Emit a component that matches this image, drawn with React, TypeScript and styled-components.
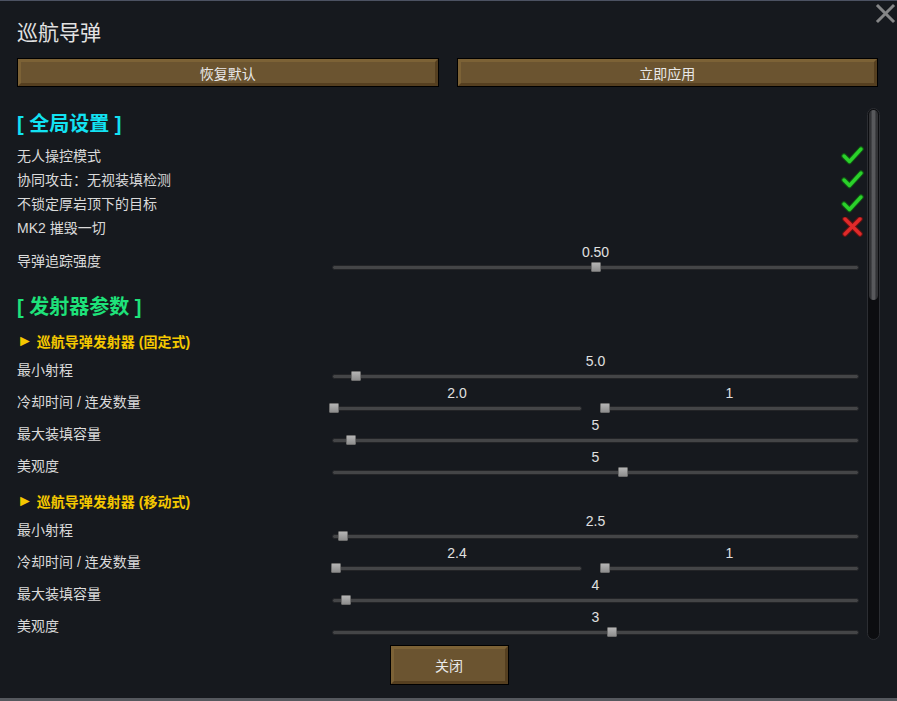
import * as React from 'react';
import styled, { createGlobalStyle } from 'styled-components';

const GlobalStyle = createGlobalStyle`
  html, body {
    margin: 0;
    padding: 0;
    background: #16191e;
  }
  body {
    font-family: "Liberation Sans", "Noto Sans CJK SC", sans-serif;
    color: #dadada;
  }
`;

const Window = styled.div`
  position: relative;
  width: 897px;
  height: 701px;
  box-sizing: border-box;
  display: flex;
  flex-direction: column;
  padding: 0 19px 0 17px;
  background: #16191e;
  border-top: 1px solid #4c5262;
  border-bottom: 3px solid #55585e;
  overflow: hidden;
`;

const Header = styled.div`
  height: 57px;
  box-sizing: border-box;
  padding-top: 19px;
`;

const Title = styled.div`
  font-size: 21px;
  line-height: 26px;
  color: #e2e2e2;
`;

const CloseIcon = styled.button`
  position: absolute;
  top: 2px;
  right: 1px;
  width: 21px;
  height: 21px;
  padding: 0;
  border: none;
  background: none;
  cursor: pointer;
`;

const ButtonRow = styled.div`
  display: grid;
  grid-template-columns: 1fr 1fr;
  gap: 18px;
`;

const Button = styled.button<{ $width?: number; $height?: number }>`
  width: ${(p) => (p.$width ? `${p.$width}px` : '100%')};
  height: ${(p) => p.$height ?? 29}px;
  padding: 0;
  border: 1px solid #000;
  background: #6b5430;
  cursor: pointer;
`;

const ButtonFace = styled.span`
  display: flex;
  align-items: center;
  justify-content: center;
  width: 100%;
  height: 100%;
  box-sizing: border-box;
  border: 3px solid;
  border-color: #7c6236 #553f20 #553f20 #7c6236;
  font-family: "Liberation Sans", "Noto Sans CJK SC", sans-serif;
  font-size: 14px;
  color: #e8e8e8;
`;

const ScrollArea = styled.div`
  display: flex;
  gap: 2px;
  height: 532px;
  margin-top: 21px;
  margin-right: -2px;
`;

const Content = styled.div`
  flex: 1;
  padding-top: 2px;
  overflow: hidden;
`;

const ScrollTrack = styled.div`
  width: 13px;
  height: 100%;
  box-sizing: border-box;
  border-radius: 7px;
  background: #0c0d10;
  border: 1px solid #2c2e33;
  padding: 1px;
`;

const ScrollThumb = styled.div`
  height: 190px;
  border-radius: 6px;
  background: linear-gradient(90deg, #323336 0 22%, #58595c 36% 64%, #323336 78% 100%);
`;

const SectionTitle = styled.div<{ $color: string; $top?: number }>`
  margin-top: ${(p) => p.$top ?? 0}px;
  margin-bottom: 5px;
  height: 28px;
  line-height: 28px;
  font-size: 20px;
  font-weight: bold;
  color: ${(p) => p.$color};
`;

const SubTitle = styled.div`
  display: flex;
  align-items: center;
  gap: 4px;
  margin-top: 7px;
  height: 25px;
  font-size: 14px;
  font-weight: bold;
  color: #f5c800;
`;

const Arrow = styled.span`
  font-size: 16px;
  font-weight: normal;
`;

const ToggleRow = styled.div`
  display: flex;
  align-items: center;
  justify-content: space-between;
  height: 24px;
  padding-right: 1px;
  font-size: 14px;
`;

const SliderRow = styled.div<{ $top?: number }>`
  display: grid;
  grid-template-columns: 315px 1fr;
  align-items: center;
  height: 32px;
  margin-top: ${(p) => p.$top ?? 0}px;
  padding-right: 6px;
  font-size: 14px;
`;

const Controls = styled.div<{ $split?: boolean }>`
  align-self: start;
  display: grid;
  grid-template-columns: ${(p) => (p.$split ? '250px 1fr' : '1fr')};
  gap: 18px;
`;

const SliderBox = styled.div`
  display: flex;
  flex-direction: column;
`;

const SliderValue = styled.div`
  height: 16px;
  line-height: 16px;
  text-align: center;
  font-size: 14px;
  color: #e0e0e0;
`;

const TrackArea = styled.div`
  position: relative;
  height: 14px;
  display: flex;
  align-items: center;
`;

const Track = styled.div`
  width: 100%;
  height: 5px;
  box-sizing: border-box;
  border-radius: 3px;
  border: 1px solid #232427;
  background: #444547;
`;

const Thumb = styled.div`
  position: absolute;
  top: 50%;
  width: 10px;
  height: 10px;
  box-sizing: border-box;
  margin-top: -5px;
  border-radius: 1px;
  border: 1px solid #6e6e6e;
  background: linear-gradient(180deg, #b4b4b4, #8e8e8e);
`;

const Footer = styled.div`
  display: flex;
  justify-content: center;
  margin-top: 5px;
  padding-left: 3px;
`;

const Check = () => (
  <svg width="23" height="20" viewBox="0 0 23 20">
    <polyline points="3,11 8.5,16.5 20,4" fill="none" stroke="#0f5a12" strokeWidth="5.5" strokeLinecap="round" strokeLinejoin="round" />
    <polyline points="3,11 8.5,16.5 20,4" fill="none" stroke="#2bd12b" strokeWidth="3.4" strokeLinecap="round" strokeLinejoin="round" />
  </svg>
);

const Cross = () => (
  <svg width="23" height="20" viewBox="0 0 23 20">
    <path d="M4 2 L19 17 M19 2 L4 17" stroke="#6a1212" strokeWidth="5.5" strokeLinecap="round" />
    <path d="M4 2 L19 17 M19 2 L4 17" stroke="#e02a2a" strokeWidth="3.4" strokeLinecap="round" />
  </svg>
);

type SliderProps = { label: string; frac: number };

const Slider = ({ label, frac }: SliderProps) => (
  <SliderBox>
    <SliderValue>{label}</SliderValue>
    <TrackArea>
      <Track />
      <Thumb style={{ left: `calc(${frac} * (100% - 4px) - 3px)` }} />
    </TrackArea>
  </SliderBox>
);

type Setting = {
  name: string;
  sliders: SliderProps[];
};

const fixedLauncher: Setting[] = [
  { name: '最小射程', sliders: [{ label: '5.0', frac: 0.042 }] },
  { name: '冷却时间 / 连发数量', sliders: [{ label: '2.0', frac: 0 }, { label: '1', frac: 0.012 }] },
  { name: '最大装填容量', sliders: [{ label: '5', frac: 0.033 }] },
  { name: '美观度', sliders: [{ label: '5', frac: 0.553 }] },
];

const mobileLauncher: Setting[] = [
  { name: '最小射程', sliders: [{ label: '2.5', frac: 0.017 }] },
  { name: '冷却时间 / 连发数量', sliders: [{ label: '2.4', frac: 0.008 }, { label: '1', frac: 0.012 }] },
  { name: '最大装填容量', sliders: [{ label: '4', frac: 0.023 }] },
  { name: '美观度', sliders: [{ label: '3', frac: 0.532 }] },
];

const toggles: { name: string; on: boolean }[] = [
  { name: '无人操控模式', on: true },
  { name: '协同攻击：无视装填检测', on: true },
  { name: '不锁定厚岩顶下的目标', on: true },
  { name: 'MK2 摧毁一切', on: false },
];

const SettingRows = ({ items }: { items: Setting[] }) => (
  <>
    {items.map((s) => (
      <SliderRow key={s.name}>
        <span>{s.name}</span>
        <Controls $split={s.sliders.length > 1}>
          {s.sliders.map((sl, i) => (
            <Slider key={i} {...sl} />
          ))}
        </Controls>
      </SliderRow>
    ))}
  </>
);

export default function App() {
  return (
    <>
      <GlobalStyle />
      <Window>
        <Header>
          <Title>巡航导弹</Title>
        </Header>
        <CloseIcon aria-label="close">
          <svg width="21" height="21" viewBox="0 0 21 21">
            <path d="M3 3 L18 18 M18 3 L3 18" stroke="#858687" strokeWidth="3" strokeLinecap="square" />
          </svg>
        </CloseIcon>

        <ButtonRow>
          <Button>
            <ButtonFace>恢复默认</ButtonFace>
          </Button>
          <Button>
            <ButtonFace>立即应用</ButtonFace>
          </Button>
        </ButtonRow>

        <ScrollArea>
          <Content>
            <SectionTitle $color="#12e2f2">[ 全局设置 ]</SectionTitle>
            {toggles.map((t) => (
              <ToggleRow key={t.name}>
                <span>{t.name}</span>
                {t.on ? <Check /> : <Cross />}
              </ToggleRow>
            ))}
            <SliderRow $top={5}>
              <span>导弹追踪强度</span>
              <Controls>
                <Slider label="0.50" frac={0.5} />
              </Controls>
            </SliderRow>

            <SectionTitle $color="#1ee27a" $top={17}>[ 发射器参数 ]</SectionTitle>
            <SubTitle>
              <Arrow>►</Arrow>巡航导弹发射器 (固定式)
            </SubTitle>
            <SettingRows items={fixedLauncher} />
            <SubTitle>
              <Arrow>►</Arrow>巡航导弹发射器 (移动式)
            </SubTitle>
            <SettingRows items={mobileLauncher} />
          </Content>
          <ScrollTrack>
            <ScrollThumb />
          </ScrollTrack>
        </ScrollArea>

        <Footer>
          <Button $width={119} $height={40}>
            <ButtonFace>关闭</ButtonFace>
          </Button>
        </Footer>
      </Window>
    </>
  );
}
